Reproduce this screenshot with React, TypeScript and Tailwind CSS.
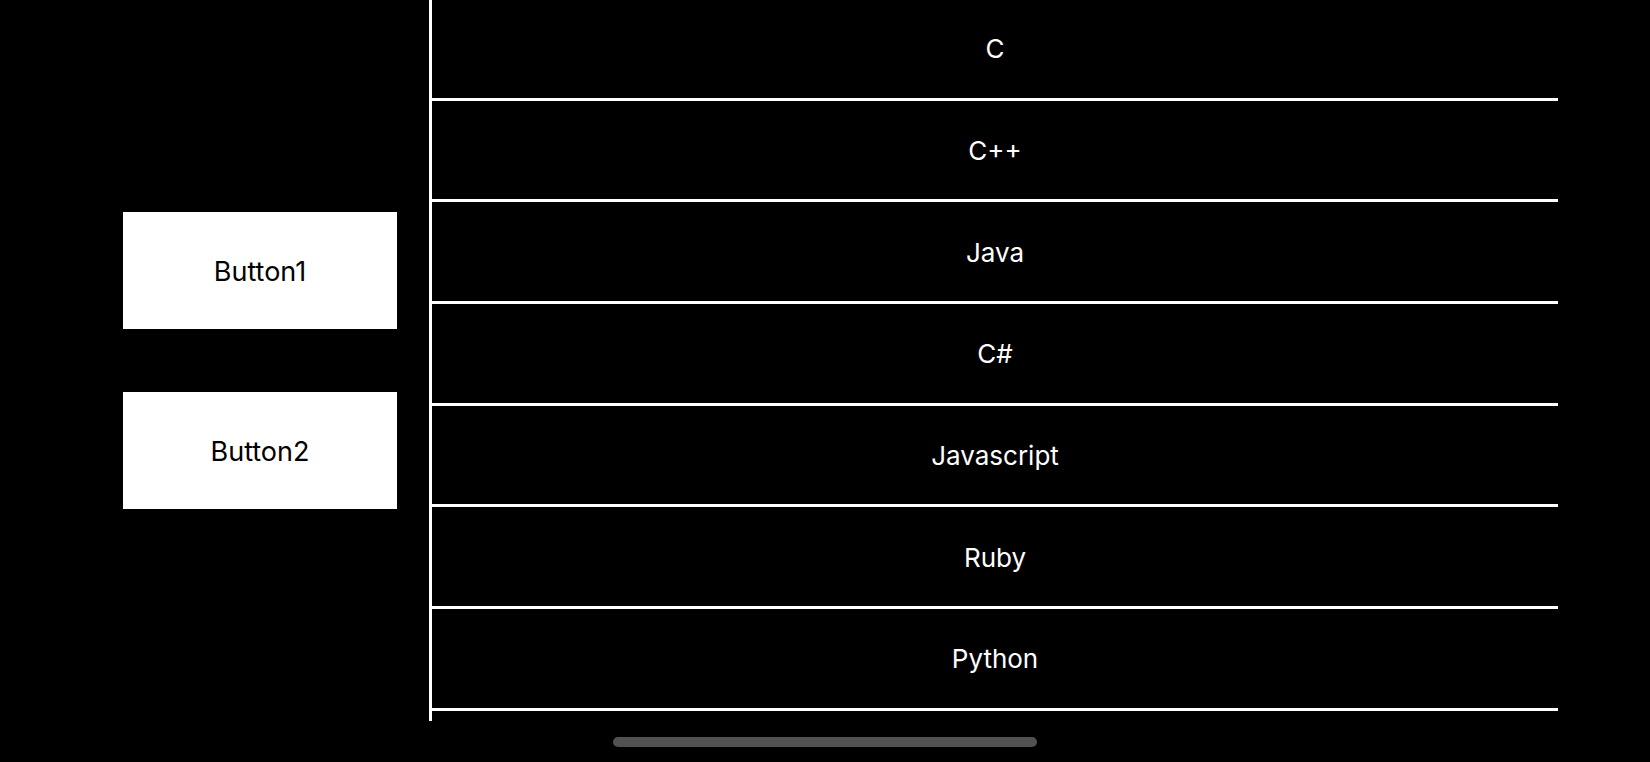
const languages = ["C", "C++", "Java", "C#", "Javascript", "Ruby", "Python"];

export default function App() {
  return (
    <div
      className="w-[1650px] h-[762px] bg-black flex flex-col overflow-hidden"
      style={{ fontFamily: "Inter, 'Noto Sans', sans-serif" }}
    >
      <div className="flex h-[721px]">
        {/* left buttons */}
        <div className="w-[432px] h-full border-r-[3px] border-white flex flex-col justify-center gap-[63px] pl-[123px]">
          <button className="w-[274px] h-[117px] bg-white text-black text-[27px] leading-none pt-px">
            Button1
          </button>
          <button className="w-[274px] h-[117px] bg-white text-black text-[27px] leading-none pt-px">
            Button2
          </button>
        </div>

        {/* list */}
        <div className="w-[1126px] flex flex-col -mt-px">
          {languages.map((lang) => (
            <div
              key={lang}
              className="h-[101.67px] shrink-0 border-b-[3px] border-white flex items-center justify-center text-white text-[26px] leading-none pt-[2px]"
            >
              {lang}
            </div>
          ))}
        </div>
      </div>

      {/* home indicator */}
      <div className="flex justify-center pt-[16px]">
        <div className="w-[424px] h-[10px] rounded-full bg-[#515151]" />
      </div>
    </div>
  );
}
